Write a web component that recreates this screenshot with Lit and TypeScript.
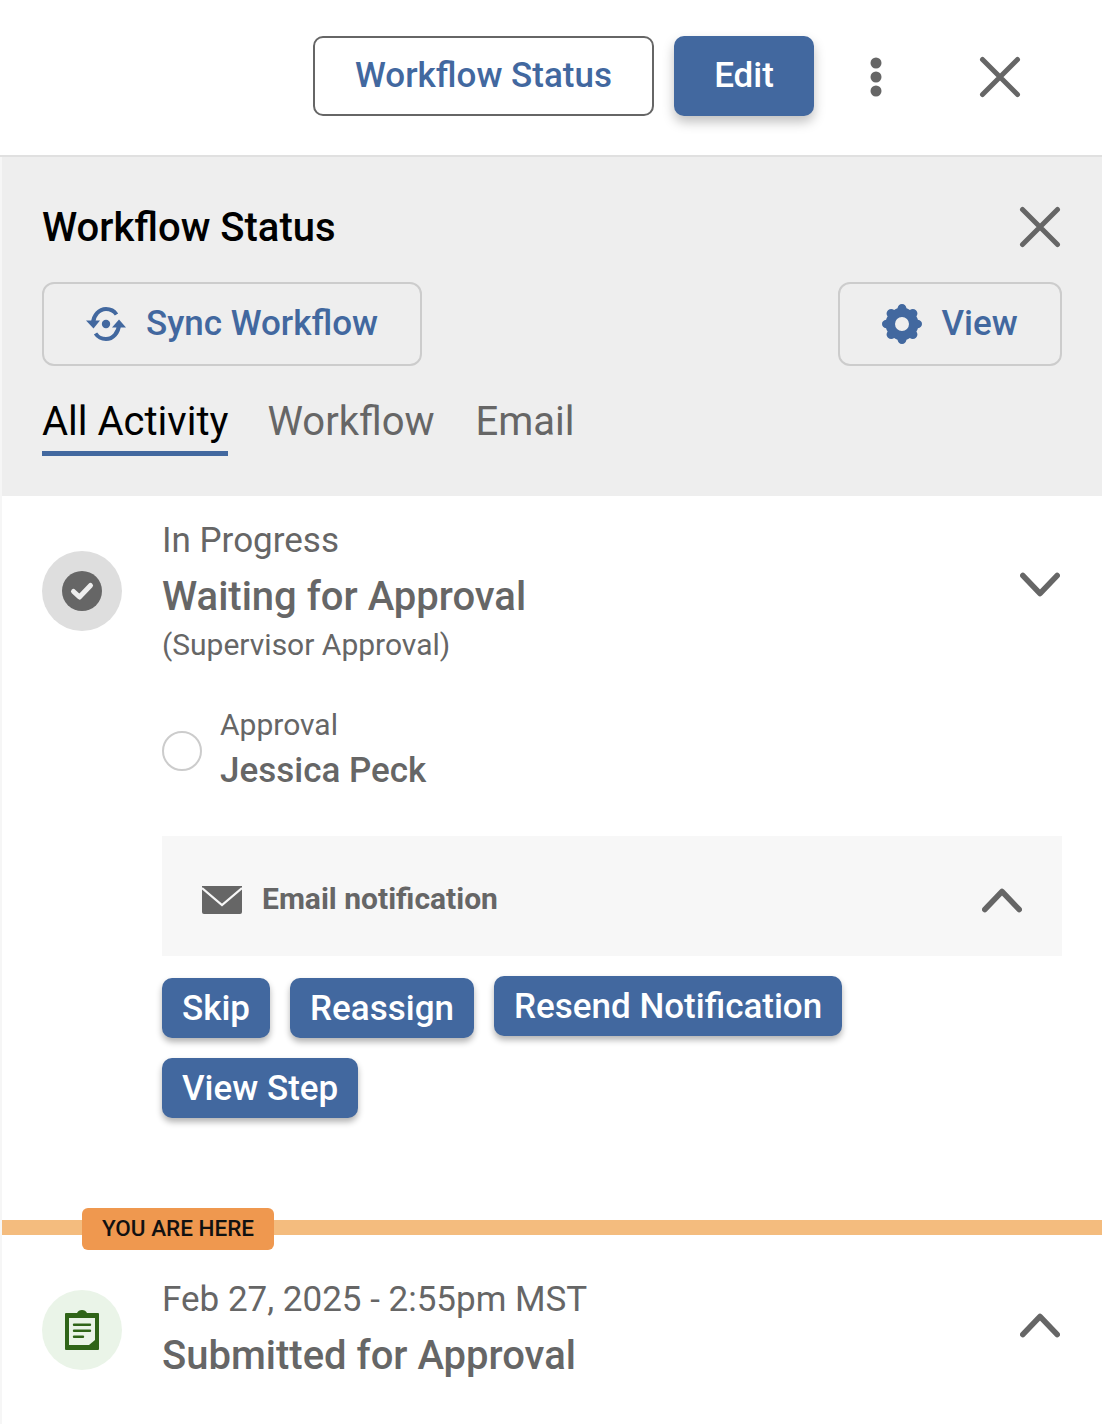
import { LitElement, html, css } from 'lit';
import { customElement } from 'lit/decorators.js';

const BLUE = css`#42689f`;

@customElement('app-root')
export class AppRoot extends LitElement {
  static styles = css`
    :host {
      display: block;
      width: 1102px;
      height: 1424px;
      overflow: hidden;
      background: #f6f6f6;
      font-family: Roboto, 'Liberation Sans', sans-serif;
      color: #666666;
    }
    .page {
      margin-left: 2px;
      width: 1100px;
      height: 1267px;
      background: #ffffff;
    }
    svg { display: block; flex: none; }

    /* top bar */
    .topbar {
      width: 1102px;
      height: 157px;
      box-sizing: border-box;
      padding: 36px 0 0 311px;
      display: flex;
      align-items: flex-start;
      background: #ffffff;
      border-bottom: 2px solid #e0e0e0;
    }
    .top-btn {
      height: 80px;
      box-sizing: border-box;
      border-radius: 10px;
      font-size: 35px;
      font-weight: 500;
      display: flex;
      align-items: center;
      justify-content: center;
      padding-bottom: 2px;
    }
    .top-outline {
      margin-left: 2px;
      width: 341px;
      border: 2px solid #666666;
      color: ${BLUE};
      background: #fff;
    }
    .top-solid {
      margin-left: 20px;
      width: 140px;
      background: ${BLUE};
      color: #fff;
      box-shadow: 0 6px 12px rgba(0, 0, 0, 0.25);
    }
    .kebab { margin-left: 56px; margin-top: 21px; }
    .top-x { margin-left: 97px; margin-top: 20px; }

    /* grey panel */
    .panel {
      height: 339px;
      box-sizing: border-box;
      background: #eeeeee;
      padding: 0 40px;
    }
    .panel-head {
      height: 125px;
      padding-top: 51px;
      box-sizing: border-box;
      display: flex;
      justify-content: space-between;
      align-items: flex-start;
    }
    .panel-x { margin: -2px 1px 0 0; }
    .panel-title {
      font-size: 40px;
      line-height: 40px;
      font-weight: 500;
      color: #000;
    }
    .actions { display: flex; justify-content: space-between; }
    .ghost {
      height: 84px;
      box-sizing: border-box;
      border: 2px solid #cccccc;
      border-radius: 12px;
      color: ${BLUE};
      font-size: 35px;
      font-weight: 500;
      display: flex;
      align-items: center;
      justify-content: center;
      gap: 20px;
      padding-bottom: 2px;
    }
    .sync { width: 380px; }
    .view { width: 224px; gap: 19px; }
    .ghost svg { margin-top: 2px; }
    .tabs { display: flex; gap: 41px; margin-top: 32px; }
    .tab {
      font-size: 40px;
      line-height: 47px;
      height: 58px;
      box-sizing: border-box;
      color: #666666;
    }
    .tab.on { color: #000; border-bottom: 5px solid ${BLUE}; margin-right: -2px; }

    /* timeline rows */
    .row { display: flex; padding: 0 40px; position: relative; }
    .row-first { padding-top: 24px; }
    .row-last { padding-top: 15px; }
    .badge-icon {
      width: 80px;
      height: 80px;
      border-radius: 50%;
      display: flex;
      align-items: center;
      justify-content: center;
      flex: none;
    }
    .grey-disc { background: #dedede; margin-top: 31px; }
    .green-disc { background: #eaf4e8; margin-top: 40px; }
    .body { margin-left: 40px; flex: 1; min-width: 0; }
    .meta { font-size: 35px; line-height: 42px; }
    .meta-date { margin-top: 29px; }
    .heading { font-size: 40px; line-height: 48px; font-weight: 500; margin-top: 11px; }
    .sub { font-size: 30px; line-height: 38px; margin-top: 5px; }
    .chev { position: absolute; right: 42px; }
    .chev-first { top: 76px; }
    .chev-last { top: 77px; }

    .assignee { display: flex; align-items: center; margin-top: 42px; gap: 18px; }
    .radio {
      width: 40px;
      height: 40px;
      box-sizing: border-box;
      border-radius: 50%;
      border: 2px solid #cccccc;
      flex: none;
      margin-top: -2px;
    }
    .assignee-kind { font-size: 30px; line-height: 38px; }
    .assignee-name { font-size: 35px; line-height: 54px; font-weight: 500; }

    .email {
      margin-top: 38px;
      height: 120px;
      background: #f7f7f7;
      display: flex;
      align-items: center;
      padding: 8px 40px 0 40px;
      box-sizing: border-box;
      justify-content: space-between;
    }
    .email-left {
      display: flex;
      align-items: center;
      gap: 20px;
      font-size: 30px;
      font-weight: 700;
      line-height: 36px;
    }
    .email-label { margin-top: -2px; }

    .buttons {
      display: flex;
      flex-wrap: wrap;
      gap: 20px;
      margin-top: 22px;
      width: 720px;
    }
    .pill {
      height: 60px;
      box-sizing: border-box;
      padding: 0 20px;
      border-radius: 10px;
      background: ${BLUE};
      color: #fff;
      font-size: 35px;
      font-weight: 500;
      display: flex;
      align-items: center;
      box-shadow: 0 4px 6px rgba(0, 0, 0, 0.3);
    }
    .raised { margin-top: -2px; margin-bottom: 2px; }

    /* you are here */
    .here {
      position: relative;
      height: 15px;
      margin-top: 102px;
      background: #f4bc7e;
    }
    .here-tag {
      position: absolute;
      left: 80px;
      top: -12px;
      width: 192px;
      height: 42px;
      box-sizing: border-box;
      padding-bottom: 3px;
      border-radius: 6px;
      background: #ef984f;
      color: #111;
      font-size: 22.500px;
      font-weight: 500;
      display: flex;
      align-items: center;
      justify-content: center;
    }
  `;

  private closeIcon(cls: string) {
    return html`<svg class=${cls} width="42" height="42" viewBox="0 0 42 42" fill="none" stroke="#666" stroke-width="5" stroke-linecap="round">
      <path d="M3.500 3.500 38.500 38.500M38.500 3.500 3.500 38.500"></path>
    </svg>`;
  }

  private chevron(up: boolean) {
    const d = up ? 'M2.800 22.500 20 4.500 37.200 22.500' : 'M2.800 3.500 20 21.500 37.200 3.500';
    return html`<svg width="40" height="26" viewBox="0 0 40 26" fill="none" stroke="#666" stroke-width="5.500" stroke-linecap="round" stroke-linejoin="round">
      <path d=${d}></path>
    </svg>`;
  }

  render() {
    return html`
      <div class="topbar">
        <div class="top-btn top-outline">Workflow Status</div>
        <div class="top-btn top-solid">Edit</div>
        <svg class="kebab" width="12" height="40" viewBox="0 0 12 40" fill="#666">
          <circle cx="6" cy="6" r="5.500"></circle>
          <circle cx="6" cy="20" r="5.500"></circle>
          <circle cx="6" cy="34" r="5.500"></circle>
        </svg>
        ${this.closeIcon('top-x')}
      </div>
      <div class="page">
        <div class="panel">
          <div class="panel-head">
            <div class="panel-title">Workflow Status</div>
            ${this.closeIcon('panel-x')}
          </div>
          <div class="actions">
            <div class="ghost sync">
              <svg width="40" height="36" viewBox="0 0 40 36">
                <circle cx="20" cy="18" r="4.200" fill="${BLUE}"></circle>
                <path fill="none" stroke="${BLUE}" stroke-width="4" d="M7 17C7.500 9.500 13 3 20 3c4.500 0 8.300 2.200 10.500 5.500M33 19c-.5 7.500-6 14-13 14-4.500 0-8.300-2.200-10.500-5.500"></path>
                <path fill="${BLUE}" d="M0 14.500h14L7.500 22.500zM26 21.500h14L33 13.500z"></path>
              </svg>
              Sync Workflow
            </div>
            <div class="ghost view">
              <svg width="40" height="40" viewBox="0 0 40 40">
                <path fill="${BLUE}" fill-rule="evenodd" d="M20 0c2.600 0 4 1.700 4.500 4.300 1.200.4 2.300.9 3.300 1.600C30 4.400 32.200 4.600 34 6.300c1.800 1.800 1.900 4 .4 6.200.7 1 1.200 2.100 1.500 3.300C38.400 16.300 40 17.600 40 20s-1.600 3.700-4.100 4.200c-.3 1.200-.8 2.300-1.500 3.300 1.500 2.200 1.400 4.400-.4 6.200-1.800 1.700-4 1.900-6.200.4-1 .7-2.100 1.200-3.300 1.600C24 38.300 22.600 40 20 40s-4-1.700-4.500-4.300c-1.200-.4-2.300-.9-3.300-1.600-2.200 1.500-4.400 1.300-6.200-.4-1.800-1.800-1.900-4-.4-6.200-.7-1-1.200-2.100-1.500-3.300C1.600 23.700 0 22.400 0 20s1.600-3.700 4.100-4.200c.3-1.200.8-2.300 1.500-3.300C4.100 10.300 4.200 8.100 6 6.300c1.800-1.700 4-1.900 6.200-.4 1-.7 2.100-1.200 3.300-1.600C16 1.700 17.400 0 20 0zm0 13a7 7 0 1 0 0 14 7 7 0 0 0 0-14z"></path>
              </svg>
              View
            </div>
          </div>
          <div class="tabs">
            <div class="tab on">All Activity</div>
            <div class="tab">Workflow</div>
            <div class="tab">Email</div>
          </div>
        </div>

        <div class="row row-first">
          <div class="badge-icon grey-disc">
            <svg width="40" height="40" viewBox="0 0 40 40">
              <circle cx="20" cy="20" r="20" fill="#666"></circle>
              <path d="M11.500 20.500 17.500 26 28.500 14.500" fill="none" stroke="#eee" stroke-width="5" stroke-linecap="round" stroke-linejoin="round"></path>
            </svg>
          </div>
          <div class="body">
            <div class="meta">In Progress</div>
            <div class="heading">Waiting for Approval</div>
            <div class="sub">(Supervisor Approval)</div>
            <div class="assignee">
              <div class="radio"></div>
              <div>
                <div class="assignee-kind">Approval</div>
                <div class="assignee-name">Jessica Peck</div>
              </div>
            </div>
            <div class="email">
              <div class="email-left">
                <svg width="40" height="28" viewBox="0 0 40 28">
                  <path fill="#666" d="M0 0h40v26a2 2 0 0 1-2 2H2a2 2 0 0 1-2-2z"></path>
                  <path d="M0 2 20 19 40 2" fill="none" stroke="#f7f7f7" stroke-width="2.200"></path>
                </svg>
                <span class="email-label">Email notification</span>
              </div>
              ${this.chevron(true)}
            </div>
            <div class="buttons">
              <div class="pill">Skip</div>
              <div class="pill">Reassign</div>
              <div class="pill raised">Resend Notification</div>
              <div class="pill">View Step</div>
            </div>
          </div>
          <div class="chev chev-first">${this.chevron(false)}</div>
        </div>

        <div class="here"><div class="here-tag">YOU ARE HERE</div></div>

        <div class="row row-last">
          <div class="badge-icon green-disc">
            <svg width="34" height="40" viewBox="0 0 34 40">
              <path fill="#2f6418" d="M1 3h11c1-2 2.500-3 5-3s4 1 5 3h11a1 1 0 0 1 1 1v35a1 1 0 0 1-1 1H1a1 1 0 0 1-1-1V4a1 1 0 0 1 1-1z"></path>
              <path fill="#eaf4e8" d="M4 8h26v22l-6 5H4z"></path>
              <path fill="none" stroke="#2f6418" stroke-width="2.400" d="M9 14.700h16M9 20.700h16M9 26.700h9" stroke-linecap="round"></path>
            </svg>
          </div>
          <div class="body">
            <div class="meta meta-date">Feb 27, 2025 - 2:55pm MST</div>
            <div class="heading">Submitted for Approval</div>
          </div>
          <div class="chev chev-last">${this.chevron(true)}</div>
        </div>
      </div>
    `;
  }
}
